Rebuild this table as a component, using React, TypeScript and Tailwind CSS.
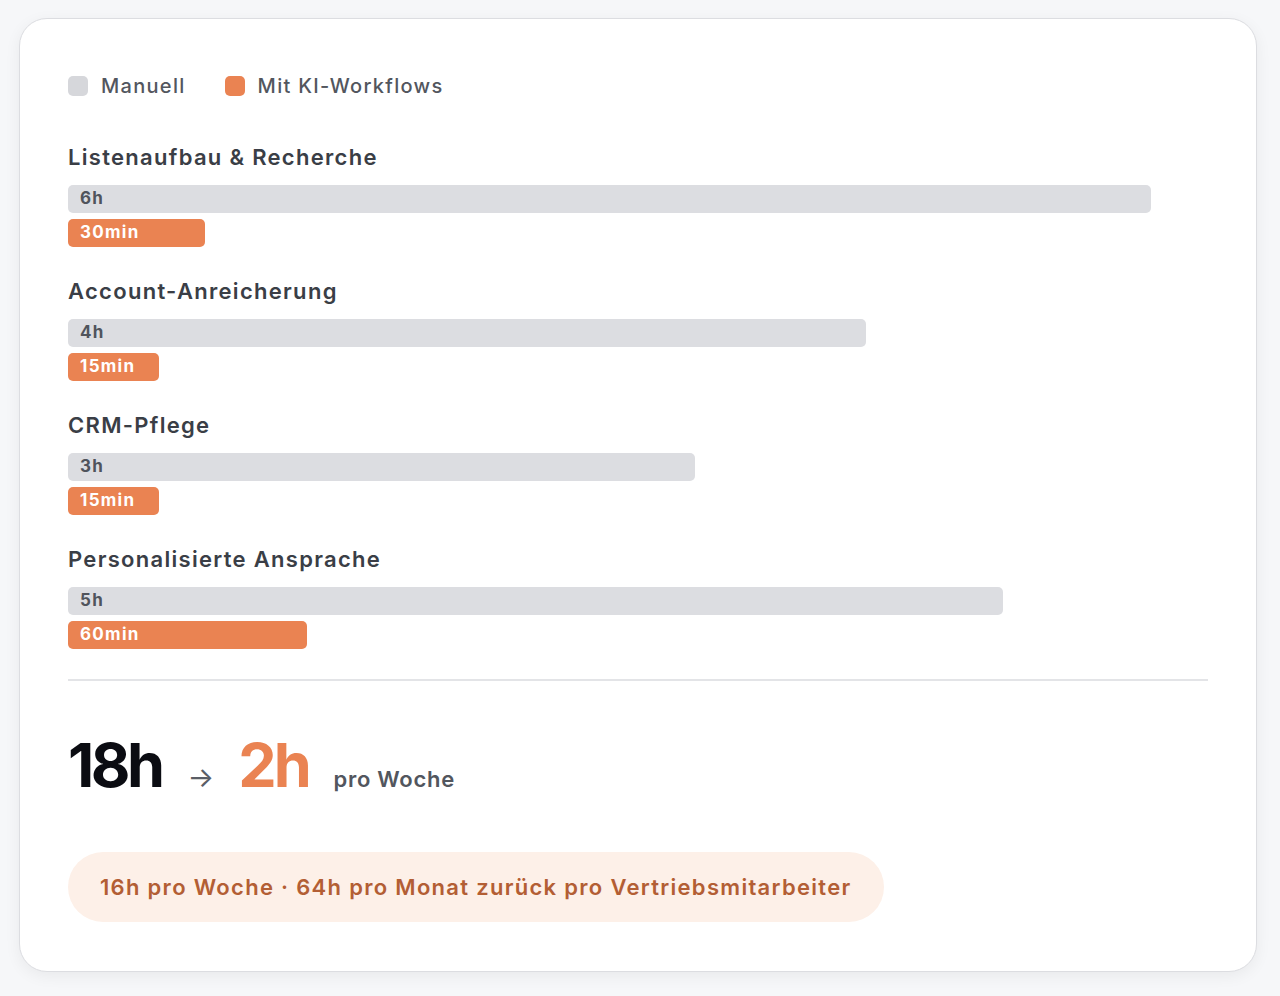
import React, { FC } from 'react';

interface Task {
    name: string;
    manual: string;
    manualPct: number;
    ai: string;
    aiPct: number;
}

const tasks: Task[] = [
    { name: 'Listenaufbau & Recherche', manual: '6h', manualPct: 95, ai: '30min', aiPct: 12 },
    { name: 'Account-Anreicherung', manual: '4h', manualPct: 70, ai: '15min', aiPct: 8 },
    { name: 'CRM-Pflege', manual: '3h', manualPct: 55, ai: '15min', aiPct: 8 },
    { name: 'Personalisierte Ansprache', manual: '5h', manualPct: 82, ai: '60min', aiPct: 21 },
];

const TaskRow: FC<{ task: Task }> = ({ task }) => (
    <div className="flex flex-col">
        <h3 className="text-[22px] leading-[30px] font-semibold tracking-[1.3px] text-[#3a3e46]">{task.name}</h3>
        <div className="mt-[13px] flex flex-col gap-[6px]">
            <div
                className="flex h-[28px] items-center rounded-[5px] bg-[#dcdde1] pl-[12px] text-[17px] font-bold tracking-[1.3px] text-[#50545c]"
                style={{ width: `${task.manualPct}%` }}
            >
                {task.manual}
            </div>
            <div
                className="flex h-[28px] items-center rounded-[5px] bg-[#ea8352] pl-[12px] text-[17px] font-bold tracking-[1.3px] text-white"
                style={{ width: `${task.aiPct}%` }}
            >
                {task.ai}
            </div>
        </div>
    </div>
);

const App: FC = () => {
    return (
        <div className="min-h-[996px] w-full bg-[#f6f7f9] px-[19px] pt-[18px] font-['Inter',sans-serif]">
            <div className="w-[1238px] rounded-[28px] border border-[#dcdde1] bg-white px-[48px] pt-[53px] pb-[49px] shadow-[0_4px_16px_rgba(0,0,0,0.06)]">
                {/* legend */}
                <div className="flex items-center gap-[39px] leading-[28px]">
                    <div className="flex items-center gap-[13px]">
                        <span className="h-[20px] w-[20px] rounded-[5px] bg-[#d6d7db]" />
                        <span className="text-[20px] font-medium tracking-[1.3px] text-[#52565e]">Manuell</span>
                    </div>
                    <div className="flex items-center gap-[13px]">
                        <span className="h-[20px] w-[20px] rounded-[5px] bg-[#ea8352]" />
                        <span className="text-[20px] font-medium tracking-[1.3px] text-[#52565e]">Mit KI-Workflows</span>
                    </div>
                </div>

                <div className="mt-[42px] flex flex-col gap-[29px]">
                    {tasks.map((t) => (
                        <TaskRow key={t.name} task={t} />
                    ))}
                </div>

                <div className="mt-[30px] h-[2px] w-full bg-[#e3e4e7]" />

                <div className="mt-[54px] flex items-baseline">
                    <span className="text-[61px] leading-none font-bold tracking-[-3.5px] text-[#0b0c12]">18h</span>
                    <span className="ml-[26px] text-[28px] leading-none text-[#5a5e66]">→</span>
                    <span className="ml-[24px] text-[61px] leading-none font-bold tracking-[-3px] text-[#ea8352]">2h</span>
                    <span className="ml-[25px] text-[22px] font-semibold tracking-[0.7px] text-[#52565e]">pro Woche</span>
                </div>

                <div className="mt-[56px] inline-flex h-[70px] items-center rounded-full bg-[#fdf0e8] px-[32px] text-[22px] font-semibold tracking-[1.3px] text-[#b35e34]">
                    16h pro Woche · 64h pro Monat zurück pro Vertriebsmitarbeiter
                </div>
            </div>
        </div>
    );
};

export default App;
